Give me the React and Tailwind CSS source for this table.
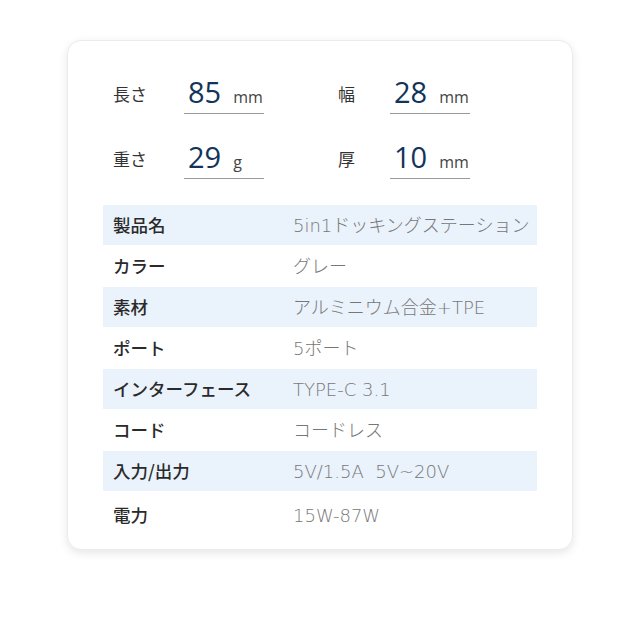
import React from "react";

const jp = { fontFamily: '"Noto Sans CJK JP", "Noto Sans", sans-serif' };
const val = { fontFamily: '"DejaVu Sans", "Noto Sans CJK JP", sans-serif' };
const num = { fontFamily: '"Open Sans", sans-serif' };

const rows = [
  ["製品名", "5in1ドッキングステーション"],
  ["カラー", "グレー"],
  ["素材", "アルミニウム合金+TPE"],
  ["ポート", "5ポート"],
  ["インターフェース", "TYPE-C 3.1"],
  ["コード", "コードレス"],
  ["入力/出力", "5V/1.5A  5V~20V"],
  ["電力", "15W-87W"],
];

function Spec({ label, value, unit, labelW }) {
  return (
    <div className="flex items-end">
      <div className={`${labelW} pb-[8px] text-[17px] text-[#333]`} style={jp}>
        {label}
      </div>
      <div className="w-[80px] border-b border-[#999] flex items-baseline pb-[4px]">
        <span className="text-[29px] leading-[34px] font-medium text-[#12345a] ml-[4px]" style={num}>
          {value}
        </span>
        <span className="text-[16px] text-[#444] ml-[12px]" style={num}>
          {unit}
        </span>
      </div>
    </div>
  );
}

export default function App() {
  return (
    <div className="w-[640px] h-[640px] bg-white pt-[40px]">
      <div className="ml-[67px] w-[506px] h-[510px] rounded-[14px] bg-white border border-[#ececec] shadow-[0_3px_10px_rgba(0,0,0,0.10)] px-[35px]">
        <div className="pl-[10px] pt-[34px] flex flex-col gap-[26px]">
          <div className="flex">
            <div className="w-[225px]">
              <Spec label="長さ" value="85" unit="mm" labelW="w-[71px]" />
            </div>
            <Spec label="幅" value="28" unit="mm" labelW="w-[52px]" />
          </div>
          <div className="flex">
            <div className="w-[225px]">
              <Spec label="重さ" value="29" unit="g" labelW="w-[71px]" />
            </div>
            <Spec label="厚" value="10" unit="mm" labelW="w-[52px]" />
          </div>
        </div>
        <div className="mt-[26px]">
          {rows.map(([k, v], i) => (
            <div
              key={k}
              className={`flex items-center ${
                i % 2 === 0 ? "h-[40px] bg-[#eaf2fb]" : i === 7 ? "h-[48px]" : "h-[42px]"
              }`}
            >
              <div className="w-[190px] pl-[10px] text-[17.5px] font-medium text-[#2a2a2a]" style={jp}>
                {k}
              </div>
              <div className="text-[18px] font-light text-[#777] whitespace-pre" style={val}>
                {v}
              </div>
            </div>
          ))}
        </div>
      </div>
    </div>
  );
}
